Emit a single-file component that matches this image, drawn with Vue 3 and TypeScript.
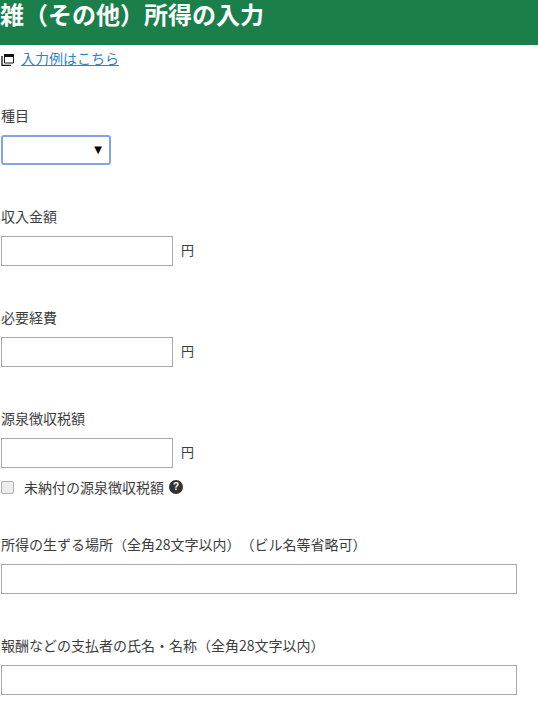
<script setup lang="ts">
const amounts = ['収入金額', '必要経費']
</script>

<template>
  <div class="page">
    <h1 class="title">雑（その他）所得の入力</h1>
    <div class="example">
      <svg class="win" width="13" height="13" viewBox="0 0 13 13" aria-hidden="true">
        <path d="M3.5 1.500h9v8.500h-9z" fill="none" stroke="#111" stroke-width="1" />
        <path d="M3 1h10v3H3z" fill="#111" />
        <path d="M1 3v9.500h9" fill="none" stroke="#111" stroke-width="1.300" />
      </svg>
      <a class="link" href="#">入力例はこちら</a>
    </div>

    <div class="field first">
      <label class="label">種目</label>
      <div class="select"><span class="arrow">▼</span></div>
    </div>

    <div v-for="a in amounts" :key="a" class="field">
      <label class="label">{{ a }}</label>
      <div class="row">
        <input class="input short" type="text" />
        <span class="unit">円</span>
      </div>
    </div>

    <div class="field">
      <label class="label">源泉徴収税額</label>
      <div class="row">
        <input class="input short" type="text" />
        <span class="unit">円</span>
      </div>
      <div class="check">
        <span class="box"></span>
        <span class="check-text">未納付の源泉徴収税額</span>
        <span class="help">?</span>
      </div>
    </div>

    <div class="field after-check">
      <label class="label">所得の生ずる場所（全角28文字以内）（ビル名等省略可）</label>
      <input class="input long" type="text" />
    </div>

    <div class="field">
      <label class="label">報酬などの支払者の氏名・名称（全角28文字以内）</label>
      <input class="input long" type="text" />
    </div>
  </div>
</template>

<style>
html, body { margin: 0; background: #fff; overflow: hidden; }
</style>

<style scoped>
.page {
  width: 538px;
  height: 709px;
  overflow: hidden;
  font-family: "Noto Sans CJK JP", "Liberation Sans", sans-serif;
  font-size: 14px;
  color: #3d3d3d;
  text-spacing-trim: space-all;
}
.title {
  margin: 0;
  height: 45px;
  box-sizing: border-box;
  background: #1a7f4b;
  color: #fff;
  font-size: 24px;
  font-weight: 700;
  line-height: 27px;
}
.example {
  display: flex;
  align-items: center;
  height: 26px;
  padding-bottom: 2px;
  padding-left: 1px;
  gap: 7px;
}
.win { flex: none; margin-top: 2px; }
.link { color: #2a86c8; text-decoration: underline; font-size: 14px; line-height: 20px; }
.field { padding-left: 1px; margin-top: 41px; }
.field.first { margin-top: 32px; }
.field.after-check { margin-top: 37px; }
.label { display: block; line-height: 20px; height: 20px; margin-bottom: 10px; }
.select {
  width: 110px;
  height: 30px;
  box-sizing: border-box;
  border: 2px solid #82a4e6;
  border-radius: 3px;
  position: relative;
  background: #fff;
}
.arrow {
  position: absolute;
  right: 7px;
  top: 5px;
  font-size: 10px;
  line-height: 16px;
  color: #000;
  font-family: "DejaVu Sans", sans-serif;
}
.row { display: flex; align-items: center; gap: 8px; }
.input {
  display: block;
  height: 30px;
  box-sizing: border-box;
  border: 1px solid #a9a9a9;
  background: #fff;
  padding: 0 4px;
  margin: 0;
  outline: none;
}
.short { width: 172px; }
.long { width: 516px; }
.unit { font-size: 13px; line-height: 20px; margin-bottom: 2px; }
.check { display: flex; align-items: center; height: 20px; margin-top: 9px; }
.box {
  width: 13px;
  height: 13px;
  box-sizing: border-box;
  border: 1px solid #b0b0b0;
  border-radius: 2px;
  background: #ededed;
  flex: none;
}
.check-text { margin-left: 10px; }
.help {
  width: 14px;
  height: 14px;
  margin-left: 5px;
  border-radius: 50%;
  background: #333;
  color: #fff;
  font: 700 10px/14px "Liberation Sans", sans-serif;
  text-align: center;
  flex: none;
}
</style>
